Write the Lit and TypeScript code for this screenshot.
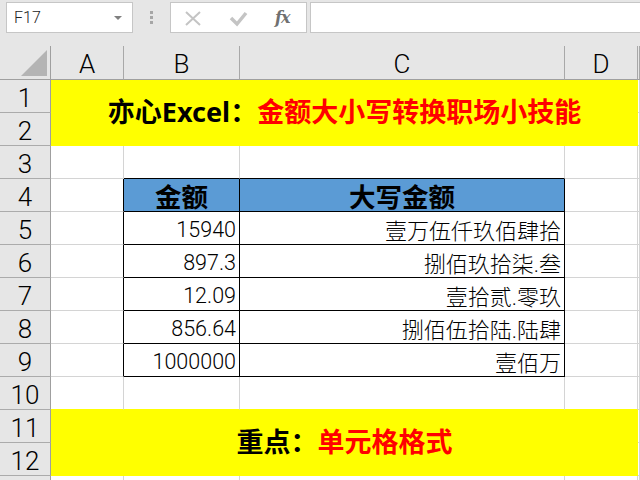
import { LitElement, html, css } from "lit";
import { customElement } from "lit/decorators.js";
import { classMap } from "lit/directives/class-map.js";

const COLS = ["A", "B", "C", "D", ""];
const DATA: [string, string][] = [
  ["15940", "壹万伍仟玖佰肆拾"],
  ["897.3", "捌佰玖拾柒.叁"],
  ["12.09", "壹拾贰.零玖"],
  ["856.64", "捌佰伍拾陆.陆肆"],
  ["1000000", "壹佰万"],
];

@customElement("app-root")
export class AppRoot extends LitElement {
  static styles = css`
    :host {
      display: block;
      width: 640px;
      height: 480px;
      overflow: hidden;
      background: #e6e6e6;
      font-family: Roboto, "Noto Sans CJK SC", sans-serif;
      color: #000;
    }
    .bar {
      height: 46px;
      box-sizing: border-box;
      padding: 2px 0 13px 6px;
      display: flex;
    }
    .box {
      background: #fff;
      border: 1px solid #c6c6c6;
      box-sizing: border-box;
      height: 31px;
    }
    .name {
      width: 127px;
      display: flex;
      align-items: center;
      justify-content: space-between;
      padding: 0 10px 0 7px;
      font-size: 16px;
      font-weight: 300;
      color: #222;
    }
    .caret {
      width: 0;
      height: 0;
      border-left: 4px solid transparent;
      border-right: 4px solid transparent;
      border-top: 4px solid #808080;
    }
    .grip {
      width: 37px;
      display: flex;
      flex-direction: column;
      align-items: center;
      justify-content: center;
      gap: 2px;
      padding-right: 1px;
      box-sizing: border-box;
    }
    .grip i {
      display: block;
      width: 3px;
      height: 3px;
      background: #a6a6a6;
    }
    .fx {
      width: 137px;
      display: flex;
      align-items: center;
    }
    .fx svg {
      display: block;
      flex: none;
    }
    .fx-label {
      font-family: "DejaVu Serif", "Liberation Serif", serif;
      font-style: italic;
      font-weight: bold;
      font-size: 16px;
      color: #707070;
      margin-left: 24px;
      letter-spacing: -1px;
    }
    .input {
      flex: 1;
      margin-left: 3px;
      border-right: 0;
    }
    .grid {
      display: grid;
      grid-template-columns: 51px 73px 116px 325px 73px 2px;
      grid-auto-rows: 33px;
      grid-template-rows: 34px;
      background: #fff;
    }
    .cell {
      box-sizing: border-box;
      border-right: 1px solid #d4d4d4;
      border-bottom: 1px solid #d4d4d4;
      display: flex;
      align-items: center;
      min-width: 0;
    }
    .corner {
      background: #e6e6e6;
      border-right: 1px solid #9f9f9f;
      border-bottom: 1px solid #9f9f9f;
      position: relative;
    }
    .corner svg {
      position: absolute;
      left: 21px;
      top: 4px;
    }
    .col {
      background: #e6e6e6;
      border-right: 1px solid #a8a8a8;
      border-bottom: 1px solid #9f9f9f;
      justify-content: center;
      padding-top: 2px;
      font-size: 26px;
      font-weight: 300;
      color: #000;
    }
    .row {
      background: #e6e6e6;
      border-right: 1px solid #9f9f9f;
      border-bottom: 1px solid #ababab;
      justify-content: center;
      padding-top: 3px;
      font-size: 26px;
      font-weight: 300;
      color: #000;
    }
    .banner {
      grid-column: 2 / span 4;
      grid-row: span 2;
      background: #ff0;
      border: 0;
      justify-content: center;
      padding-bottom: 5px;
      font-family: "Noto Sans", "Noto Sans CJK SC", sans-serif;
      font-size: 27px;
      font-weight: 700;
    }
    .red {
      color: #f00;
    }
    .edge-bottom {
      border-bottom-color: #000;
    }
    .edge-right {
      border-right-color: #000;
    }
    .yellow-bottom {
      border-bottom-color: #ff0;
    }
    .head {
      background: #5b9bd5;
      justify-content: center;
      font-size: 26.5px;
      font-weight: 700;
    }
    .num {
      justify-content: flex-end;
      padding: 3px 3px 0 0;
      font-size: 21.5px;
      font-weight: 300;
      color: #000;
    }
    .cn {
      justify-content: flex-end;
      padding: 1px 3px 0 0;
      font-size: 22px;
      font-weight: 300;
      color: #000;
    }
  `;

  private blank(rowNo: number, colIdx: number) {
    const inTable = rowNo >= 4 && rowNo <= 9;
    const edgeBottom = rowNo >= 3 && rowNo <= 9 && (colIdx === 1 || colIdx === 2);
    const edgeRight = inTable && colIdx === 0;
    return html`<div
      class=${classMap({
        cell: true,
        "edge-bottom": edgeBottom,
        "edge-right": edgeRight,
        "yellow-bottom": rowNo === 10 && colIdx < 4,
      })}
    ></div>`;
  }

  private tableRow(rowNo: number, a: string, b: string, head: boolean) {
    const cls = head ? "head" : "";
    return html`
      ${this.blank(rowNo, 0)}
      <div class="cell edge-bottom edge-right ${cls || "num"}">${a}</div>
      <div class="cell edge-bottom edge-right ${cls || "cn"}">${b}</div>
      ${this.blank(rowNo, 3)} ${this.blank(rowNo, 4)}
    `;
  }

  render() {
    const rowHead = (n: number | string) => html`<div class="cell row">${n}</div>`;
    const plain = (n: number, label: number | string = n) =>
      html`${rowHead(label)}${[0, 1, 2, 3, 4].map((c) => this.blank(n, c))}`;
    return html`
      <div class="bar">
        <div class="box name"><span>F17</span><span class="caret"></span></div>
        <div class="grip"><i></i><i></i><i></i></div>
        <div class="box fx">
          <svg width="80" height="29" viewBox="0 0 80 29" fill="none">
            <path d="M15 9 L29 22 M29 9 L15 22" stroke="#c4c4c4" stroke-width="2" />
            <path d="M60 15 L66 21 L75 10" stroke="#c4c4c4" stroke-width="3.5" />
          </svg>
          <span class="fx-label">fx</span>
        </div>
        <div class="box input"></div>
      </div>
      <div class="grid">
        <div class="cell corner">
          <svg width="26" height="26" viewBox="0 0 26 26"><polygon points="26,0 26,26 0,26" fill="#b4b4b4" /></svg>
        </div>
        ${COLS.map((c) => html`<div class="cell col">${c}</div>`)}
        ${rowHead(1)}
        <div class="cell banner">亦心Excel：<span class="red">金额大小写转换职场小技能</span></div>
        <div class="cell"></div>
        ${rowHead(2)}
        <div class="cell"></div>
        ${plain(3)}
        ${rowHead(4)}${this.tableRow(4, "金额", "大写金额", true)}
        ${DATA.map(([a, b], i) => html`${rowHead(5 + i)}${this.tableRow(5 + i, a, b, false)}`)}
        ${plain(10)}
        ${rowHead(11)}
        <div class="cell banner">重点：<span class="red">单元格格式</span></div>
        <div class="cell"></div>
        ${rowHead(12)}
        <div class="cell"></div>
        ${plain(13, "")}
      </div>
    `;
  }
}
